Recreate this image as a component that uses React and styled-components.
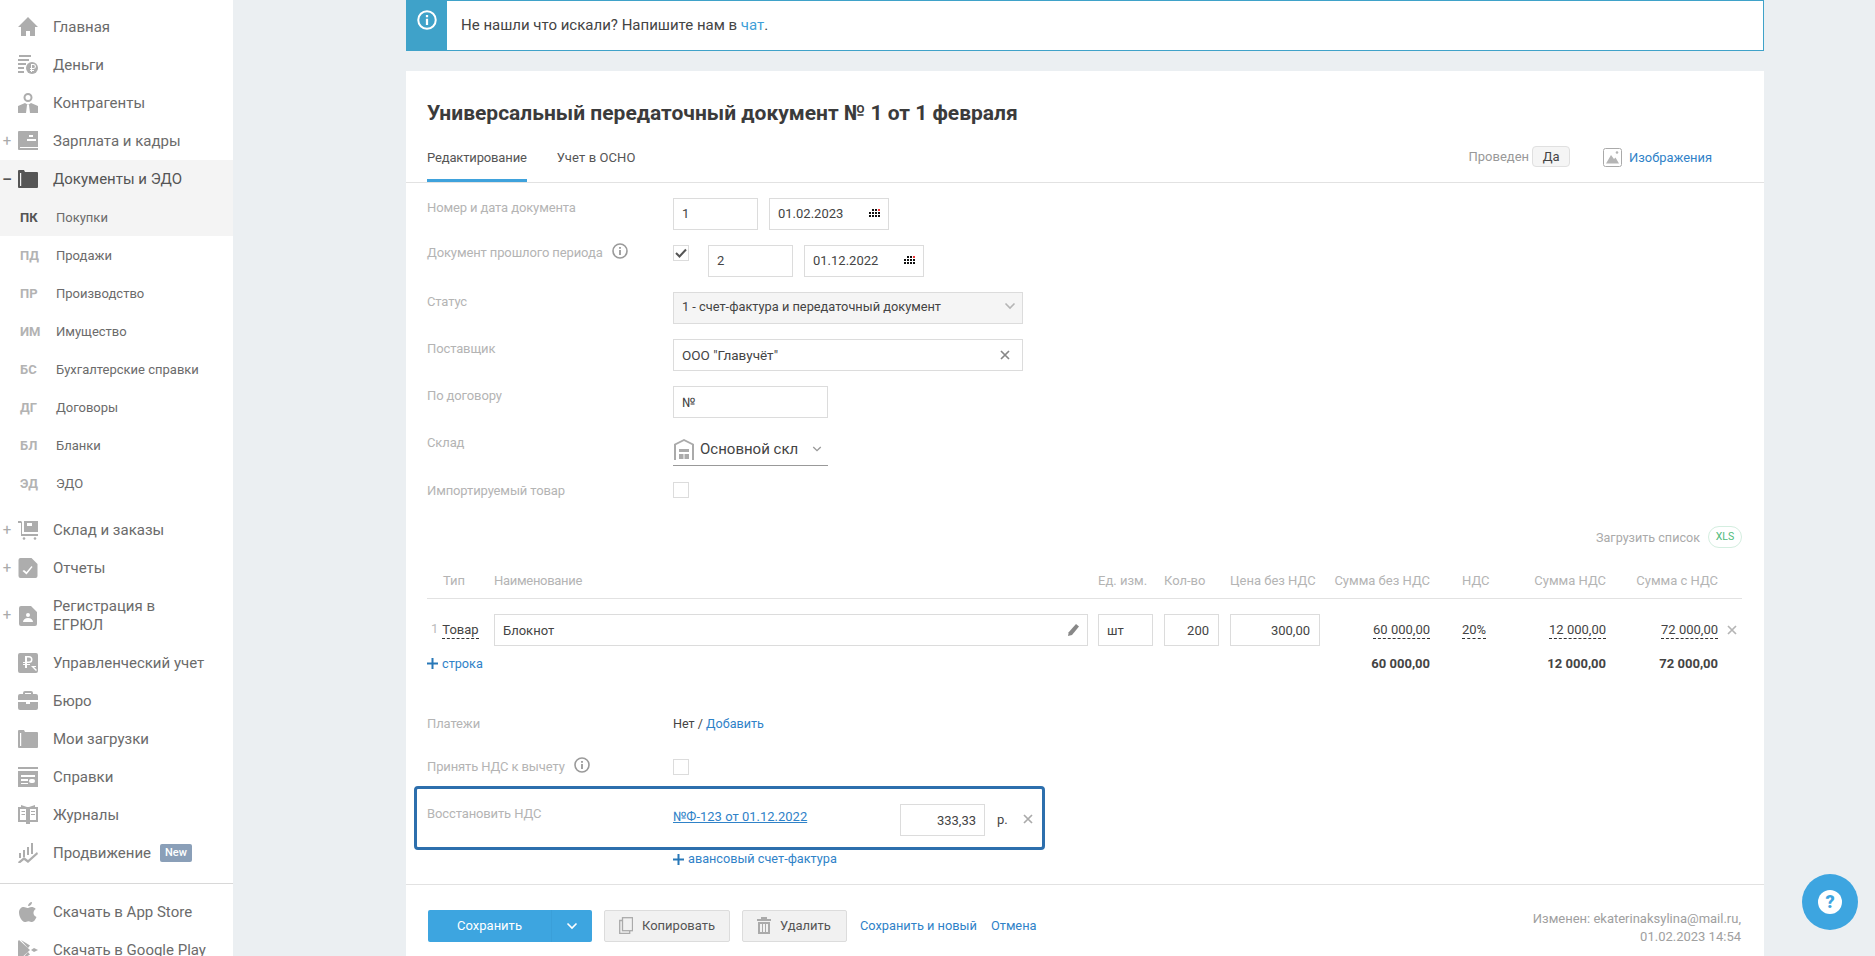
import React from "react";
import styled, { createGlobalStyle } from "styled-components";

const Global = createGlobalStyle`
  html, body { margin: 0; padding: 0; height: 956px; overflow: hidden; background: #ebeff2; }
  body { font-family: Roboto, "Liberation Sans", sans-serif; color: #333; font-size: 13px; }
  * { box-sizing: border-box; }
`;

const Page = styled.div`display: flex; height: 956px; overflow: hidden;`;
const Sidebar = styled.nav`width: 233px; flex: none; background: #fff; padding-top: 8px;`;
const NavItem = styled.div`
  display: flex; align-items: center; height: ${p => p.$tall ? "57px" : "38px"};
  background: ${p => p.$active ? "#f4f4f4" : "transparent"};
  color: ${p => p.$active ? "#555" : "#6b6b6b"};
  font-size: 15px; line-height: 19px;
`;
const Toggle = styled.span`width: 18px; flex: none; text-align: center; font-size: 15px; color: ${p => p.$active ? "#555" : "#aaa"}; font-weight: ${p => p.$active ? 700 : 400}; padding-right: 4px;`;
const NavIcon = styled.svg`width: 20px; height: 20px; flex: none; margin-right: 15px; fill: ${p => p.$active ? "#555" : "#adadad"};`;
const SubItem = styled.div`
  display: flex; align-items: center; height: 38px; padding: 1px 0 0 20px; font-size: 13px;
  background: ${p => p.$active ? "#f4f4f4" : "transparent"}; color: #6b6b6b;
`;
const SubCode = styled.b`width: 36px; flex: none; font-size: 13px; color: ${p => p.$active ? "#555" : "#b3b3b3"};`;
const NavGap = styled.div`height: ${p => p.$h}px;`;
const NavDivider = styled.div`height: 1px; background: #d8d8d8; margin: 11px 0 9px;`;
const NewBadge = styled.span`background: #8a9fb8; color: #fff; font-size: 11px; font-weight: 500; border-radius: 2px; padding: 0 5px; height: 18px; line-height: 17px; margin-left: 9px;`;

const Main = styled.main`flex: none; width: 1358px; margin-left: 173px;`;
const Alert = styled.div`display: flex; height: 51px; background: #fff; border: solid #3fa2c9; border-width: 1px 1px 1px 0;`;
const AlertIcon = styled.div`width: 41px; background: #3fa2c9; display: flex; justify-content: center; padding-top: 10px; margin-top: -1px; margin-bottom: -1px;`;
const AlertText = styled.div`padding: 14px 0 0 14px; font-size: 15px; line-height: 20px; color: #444;`;
const Link = styled.a`color: ${p => p.$light ? "#3f9fd8" : "#2f82c8"}; text-decoration: ${p => p.$under ? "underline" : "none"};`;

const Card = styled.section`background: #fff; margin-top: 20px; height: 900px;`;
const Title = styled.h1`margin: 0; padding: 29px 21px 0; font-size: 21px; line-height: 26px; font-weight: 700; color: #3b3b3b;`;
const TabBar = styled.div`display: flex; align-items: flex-start; height: 43px; margin-top: 14px; padding-left: 21px; border-bottom: 1px solid #e2e2e2; padding-right: 52px;`;
const Tab = styled.div`height: 42px; padding-top: 9px; line-height: 18px; font-size: 13px; letter-spacing: ${p => p.$ls || 0}px; color: #555; margin-right: 30px; border-bottom: 3px solid ${p => p.$active ? "#3fa2dc" : "transparent"};`;
const TabSpacer = styled.div`flex: 1;`;
const Posted = styled.div`display: flex; align-items: center; height: 21px; margin-top: 6px; color: #999; font-size: 13px; gap: 3px; margin-right: 33px;`;
const YesPill = styled.span`width: 38px; height: 21px; line-height: 19px; text-align: center; background: #f5f5f5; border: 1px solid #e0e0e0; border-radius: 4px; color: #444;`;
const Images = styled.div`display: flex; align-items: center; gap: 7px; margin-top: 7px; height: 21px; font-size: 12.9px;`;

const Form = styled.div`padding: 15px 22px 0 21px;`;
const Row = styled.div`display: grid; grid-template-columns: 246px 1fr; min-height: 32px; margin-bottom: ${p => p.$mb ?? 15}px;`;
const Label = styled.div`color: #b4b4b4; font-size: 13px; letter-spacing: -0.12px; line-height: 20px; margin-top: ${p => p.$mt ?? 0}px; display: flex; align-items: flex-start; gap: 9px; height: 20px;`;
const Controls = styled.div`display: flex; align-items: flex-start; gap: ${p => p.$gap ?? 11}px;`;
const Input = styled.div`
  width: ${p => p.$w}px; height: 32px; border: 1px solid #dcdcdc; background: ${p => p.$bg || "#fff"};
  display: flex; align-items: center; justify-content: ${p => p.$right ? "flex-end" : "space-between"};
  padding: 0 ${p => p.$pr ?? 8}px ${p => p.$pb ?? 0}px 8px; font-size: ${p => p.$fs || 13}px; color: #444; flex: none;
`;
const Check = styled.div`width: 16px; height: 16px; border: 1px solid #dcdcdc; flex: none; display: flex; align-items: center; justify-content: center; margin-right: ${p => p.$mr || 0}px; margin-top: ${p => p.$mt || 0}px;`;
const Select = styled.div`width: 155px; height: 33px; border-bottom: 1px solid #999; display: flex; align-items: center; font-size: 15px; color: #444; gap: 5px; white-space: nowrap;`;
const Clip = styled.span`width: 98px; overflow: hidden; margin-right: 9px;`;
const Upload = styled.div`display: flex; justify-content: flex-end; align-items: center; gap: 8px; color: #aaa; font-size: 12.6px; margin-top: -1px; height: 22px;`;
const XlsPill = styled.span`width: 34px; height: 22px; border: 1px solid #d4eee0; border-radius: 11px; color: #4fbb7c; font-size: 10.5px; text-align: center; line-height: 20px;`;

const Grid = styled.div`display: grid; grid-template-columns: 67px 604px 66px 66px 90px 110px 70px 106px 112px 24px; align-items: center;`;
const Head = styled(Grid)`height: 51px; padding-top: 15px; border-bottom: 1px solid #e2e2e2; color: #b4b4b4; font-size: 13px;`;
const HeadCell = styled.div`text-align: ${p => p.$right ? "right" : "left"}; padding-left: ${p => p.$pl || 0}px; letter-spacing: ${p => p.$ls || 0}px; white-space: nowrap;`;
const BodyRow = styled(Grid)`margin-top: 15px; height: 32px; font-size: 13px;`;
const TypeCell = styled.div`display: flex; gap: 4px; padding-left: 4px; color: #bbb;`;
const Dashed = styled.span`color: #444; border-bottom: 1px dashed #333; line-height: 17px; display: inline-block;`;
const NumCell = styled.div`text-align: right; font-weight: ${p => p.$b ? 700 : 400}; color: #444;`;
const LeftCell = styled.div`padding-left: ${p => p.$pl || 0}px;`;
const Close = styled.span`text-align: right; display: block; padding-right: ${p => p.$pr || 0}px;`;
const TotalRow = styled(Grid)`height: 20px; margin-top: 7px; font-size: 13px;`;
const PlusLink = styled(Link)`display: inline-flex; align-items: center; gap: 4px; font-size: 12.7px; white-space: nowrap;`;
const Plus = styled.svg`width: 11px; height: 11px; fill: #2878b8;`;
const FlatRow = styled.div`display: grid; grid-template-columns: 246px 1fr; height: 20px; margin-top: ${p => p.$mt}px; line-height: 20px; color: #444; font-size: ${p => p.$fs || 13}px;`;
const Highlight = styled.div`
  width: 631px; height: 64px; margin: ${p => p.$mt}px 0 0 -13px; border: 3px solid #2d6fad; border-radius: 4px;
  display: grid; grid-template-columns: 246px 227px 85px 1fr; padding: 15px 0 0 10px;
`;
const LinkCell = styled.div`line-height: 20px; padding-top: 3px; font-size: 13px;`;
const Rub = styled.div`padding: 8px 0 0 12px; color: #444; display: flex; justify-content: space-between;`;
const Divider = styled.div`height: 1px; background: #e2e2e2; margin-top: ${p => p.$mt}px;`;
const Footer = styled.div`display: flex; align-items: flex-start; padding: 25px 23px 0 22px;`;
const Save = styled.div`width: 164px; height: 32px; display: flex; background: #3da5e0; border-radius: 2px; color: #fff; font-size: 13px; line-height: 31px;`;
const SaveLabel = styled.div`width: 124px; text-align: center; border-right: 1px solid #3a9fd9;`;
const SaveArrow = styled.div`flex: 1; display: flex; align-items: center; justify-content: center;`;
const GrayBtn = styled.div`
  width: ${p => p.$w}px; margin-left: 12px; height: 32px; border: 1px solid #dcdcdc; border-radius: 2px; background: #f1f1f1;
  display: flex; align-items: center; gap: 9px; padding: 0 0 1px 14px; color: #555; font-size: 13px;
`;
const FootLink = styled(Link)`line-height: 31px; margin-left: ${p => p.$ml}px; font-size: 12.8px;`;
const Changed = styled.div`margin-left: auto; text-align: right; color: #a0a0a0; font-size: 13px; line-height: 18px;`;
const Help = styled.div`position: fixed; left: 1802px; top: 874px; width: 56px; height: 56px; border-radius: 50%; background: #3da5e0; display: flex; align-items: center; justify-content: center;`;
const HelpDot = styled.div`width: 24px; height: 24px; border-radius: 50%; background: #fff; color: #3da5e0; font-weight: 900; font-size: 18px; line-height: 24px; text-align: center;`;

const icons = {
  home: <path d="M10 0l10 10h-3v9h-5v-5H8v5H3v-9H0z" />,
  money: <><path d="M1 0h12v2H1zM0 4h11v2H0zM0 8h8v2H0zM0 12h6v2H0zM0 16h6v2H0z" /><circle cx="14" cy="13" r="6" /><path d="M13 9h2.500a2 2 0 0 1 0 5H14v1h2v1h-2v1h-1v-1h-1v-1h1v-1h-1v-1h1zm1 1v3h1.400a1.500 1.500 0 0 0 0-3z" fill="#fff" /></>,
  people: <><path fillRule="evenodd" d="M10 0a4.500 4.500 0 1 1 0 9 4.500 4.500 0 0 1 0-9zm0 2a2.500 2.500 0 1 0 0 5 2.500 2.500 0 0 0 0-5z" /><path d="M7 10 0 13v7h8l1-8h2l1 8h8v-7l-7-3-3 2z" /></>,
  wallet: <path fillRule="evenodd" d="M1 0h19v16H2v1h18v2H1a1 1 0 0 1-1-1V1a1 1 0 0 1 1-1zm10 4v2h4V4zm-2 4v2h9V8z" />,
  folder: <path d="M0 2a1 1 0 0 1 1-1h5l1 2h12a1 1 0 0 1 1 1v14a1 1 0 0 1-1 1H1a1 1 0 0 1-1-1zm2 2v13h1.200V4z" fillRule="evenodd" />,
  stock: <><path d="M0 1h3l1 1v12h16v2H3V3H0z" /><path fillRule="evenodd" d="M6 1h14v11H6zM9 3v3h5V3z" /><circle cx="6" cy="18.500" r="1.300" /><circle cx="17" cy="18.500" r="1.300" /></>,
  report: <path fillRule="evenodd" d="M2 0h11l6 6v12a2 2 0 0 1-2 2H2a2 2 0 0 1-2-2V2a2 2 0 0 1 2-2zm11 8-5 6-2.500-2L4 13l4 3.500 6-7.500z" transform="translate(.5)" />,
  reg: <path fillRule="evenodd" d="M3 0h10l6 6v12a2 2 0 0 1-2 2H3a2 2 0 0 1-2-2V2a2 2 0 0 1 2-2zm7 7a2 2 0 1 0 0 4 2 2 0 0 0 0-4zm-5 9h10c0-2-2-4-5-4s-5 2-5 4z" />,
  manage: <path fillRule="evenodd" d="M2 0h16a2 2 0 0 1 2 2v16a2 2 0 0 1-2 2H2a2 2 0 0 1-2-2V2a2 2 0 0 1 2-2zm5 3v6H5v1h2v1H5v1h2v3h2v-3h3v-1H9v-1h2a3.500 3.500 0 0 0 0-7zm2 1.500h2a2 2 0 0 1 0 4H9zM13 13l5 5 1-1-3-3h2v-1z" />,
  brief: <path d="M7 0h6a2 2 0 0 1 2 2v1h3a2 2 0 0 1 2 2v4H0V5a2 2 0 0 1 2-2h3V2a2 2 0 0 1 2-2zm0 2v1h6V2zM0 11h8v2h4v-2h8v6a2 2 0 0 1-2 2H2a2 2 0 0 1-2-2z" />,
  refs: <path fillRule="evenodd" d="M0 0h20v2H0zM0 4h20v16H0zM3 8v2h14V8zM3 12v2h7v-2zM3 16v1h7v-1zM13 12a2 2 0 1 0 0 4h2a2 2 0 1 0 0-4z" />,
  journal: <path fillRule="evenodd" d="M0 2h3V0l6 2h2l6-2v2h3v15h-8v2H8v-2H0zM2 4v11h6V4zM12 4v11h6V4zM3.500 6H7v1H3.500zM3.500 9H7v1H3.500zM13 6h4v1h-4zM13 9h4v1h-4z" />,
  promo: <path d="M13 0h2v11h-2zM9 4h2v8H9zM5 7h2v7H5zM1 10h2v5H1zM0 19l6-5 4 3 9-8 1 2-10 9-4-3-5 4z" />,
  apple: <path d="M14 0c.2 2-1.800 4.300-4 4 0-2 2-4 4-4zm4.500 15c-1 2.500-2.600 5-4.500 5-1.300 0-1.800-.8-3.500-.8S8 20 6.800 20C4 20 1 14.500 1 10.500 1 7 3.300 5 5.700 5c1.500 0 2.700 1 3.700 1s2.300-1.100 4.200-1.100c1 0 3 .4 4.200 2.200-3.400 2-2.900 6.700.7 7.900z" />,
  play: <path d="M1 0l11 10L1 20c-.6-.3-1-1-1-1.500v-17C0 .9.400.3 1 0zm2 0 9 5.500-2 2.500zm13 8 4 2-4 2-3-2zM3 20l7-8 2 2.500z" />,
};
const NI = ({ k, $active }) => <NavIcon viewBox="0 0 20 20" $active={$active}>{icons[k]}</NavIcon>;

const Item = ({ k, t, toggle, active, tall, children }) => (
  <NavItem $active={active} $tall={tall}>
    <Toggle $active={active}>{toggle}</Toggle>
    <NI k={k} $active={active} />
    <span>{t}</span>
    {children}
  </NavItem>
);
const Sub = ({ c, t, active }) => <SubItem $active={active}><SubCode $active={active}>{c}</SubCode>{t}</SubItem>;

const DateIcon = () => (
  <svg width="11" height="9" viewBox="0 0 11 9">
    {[0, 1, 2].map(r => [0, 1, 2, 3].map(c => (r === 0 && c === 0 ? null : <rect key={r + "-" + c} x={c * 3} y={r * 3} width="2" height="2" fill={r === 0 && c === 3 ? "#e33" : "#111"} />)))}
  </svg>
);
const InfoIcon = ({ size = 16, color = "#9a9a9a" }) => (
  <svg width={size} height={size} viewBox="0 0 16 16" fill="none">
    <circle cx="8" cy="8" r="7" stroke={color} strokeWidth="1.600" />
    <rect x="7.100" y="7" width="1.800" height="5" fill={color} /><rect x="7.100" y="4" width="1.800" height="1.800" fill={color} />
  </svg>
);
const Chevron = ({ color = "#b5b5b5", w = 12 }) => (
  <svg width={w} height="8" viewBox="0 0 12 8" fill="none"><path d="M1.500 1.500 6 6l4.500-4.500" stroke={color} strokeWidth="1.600" /></svg>
);
const Times = ({ color = "#888", s = 10 }) => (
  <svg width={s} height={s} viewBox="0 0 10 10"><path d="M1 1l8 8M9 1 1 9" stroke={color} strokeWidth="1.700" /></svg>
);
const PlusIcon = () => <Plus viewBox="0 0 11 11"><path d="M4.500 0h2v4.500H11v2H6.500V11h-2V6.500H0v-2h4.500z" /></Plus>;
const TickIcon = () => <svg width="12" height="10" viewBox="0 0 12 10" fill="none"><path d="M1 5l3.500 3.500L11 1.500" stroke="#555" strokeWidth="2" /></svg>;
const Pencil = () => <svg width="11" height="12" viewBox="0 0 11 12"><path d="M8 0l3 2.500L4 11 0 12l.7-3.800z" fill="#888" /></svg>;

export default function App() {
  return (
    <Page>
      <Global />
      <Sidebar>
        <Item k="home" t="Главная" />
        <Item k="money" t="Деньги" />
        <Item k="people" t="Контрагенты" />
        <Item k="wallet" t="Зарплата и кадры" toggle="+" />
        <Item k="folder" t="Документы и ЭДО" toggle="–" active />
        <Sub c="ПК" t="Покупки" active />
        <Sub c="ПД" t="Продажи" />
        <Sub c="ПР" t="Производство" />
        <Sub c="ИМ" t="Имущество" />
        <Sub c="БС" t="Бухгалтерские справки" />
        <Sub c="ДГ" t="Договоры" />
        <Sub c="БЛ" t="Бланки" />
        <Sub c="ЭД" t="ЭДО" />
        <NavGap $h={9} />
        <Item k="stock" t="Склад и заказы" toggle="+" />
        <Item k="report" t="Отчеты" toggle="+" />
        <Item k="reg" t={<>Регистрация в<br />ЕГРЮЛ</>} toggle="+" tall />
        <Item k="manage" t="Управленческий учет" />
        <Item k="brief" t="Бюро" />
        <Item k="folder" t="Мои загрузки" />
        <Item k="refs" t="Справки" />
        <Item k="journal" t="Журналы" />
        <Item k="promo" t="Продвижение"><NewBadge>New</NewBadge></Item>
        <NavDivider />
        <Item k="apple" t="Скачать в App Store" />
        <Item k="play" t="Скачать в Google Play" />
      </Sidebar>
      <Main>
        <Alert>
          <AlertIcon><InfoIcon size={20} color="#fff" /></AlertIcon>
          <AlertText>Не нашли что искали? Напишите нам в <Link $light>чат</Link>.</AlertText>
        </Alert>
        <Card>
          <Title>Универсальный передаточный документ № 1 от 1 февраля</Title>
          <TabBar>
            <Tab $active $ls={-0.15}>Редактирование</Tab>
            <Tab $ls={0.1}>Учет в ОСНО</Tab>
            <TabSpacer />
            <Posted>Проведен <YesPill>Да</YesPill></Posted>
            <Images>
              <svg width="19" height="19" viewBox="0 0 19 19" fill="none">
                <rect x=".5" y=".5" width="18" height="18" rx="2" stroke="#aaa" />
                <path d="M3 15.500 8 7l3 4 1.500-1.500L16 15.500z" fill="#b5b5b5" /><circle cx="14" cy="4.500" r="1.300" fill="#b5b5b5" />
              </svg>
              <Link>Изображения</Link>
            </Images>
          </TabBar>
          <Form>
            <Row>
              <Label>Номер и дата документа</Label>
              <Controls><Input $w={85} $pb={1}>1</Input><Input $w={120} $pb={1}>01.02.2023<DateIcon /></Input></Controls>
            </Row>
            <Row>
              <Label $mt={-2}>Документ прошлого периода <InfoIcon /></Label>
              <Controls>
                <Check $mr={8}><TickIcon /></Check>
                <Input $w={85} $pb={1}>2</Input><Input $w={120} $pb={1}>01.12.2022<DateIcon /></Input>
              </Controls>
            </Row>
            <Row>
              <Label>Статус</Label>
              <Input $w={350} $bg="#f5f5f5" $pr={6} $pb={4} $fs={12.8}>1 - счет-фактура и передаточный документ<Chevron /></Input>
            </Row>
            <Row>
              <Label>Поставщик</Label>
              <Input $w={350} $pr={12} $fs={13.5}>ООО "Главучёт"<Times /></Input>
            </Row>
            <Row>
              <Label>По договору</Label>
              <Input $w={155}>№</Input>
            </Row>
            <Row>
              <Label>Склад</Label>
              <Select>
                <svg width="22" height="22" viewBox="0 0 22 22" fill="#aaa">
                  <path d="M11 1 1 6v16h2V7l8-4 8 4v15h2V6z" /><rect x="6" y="11" width="10" height="3" /><rect x="6" y="16" width="4.500" height="5" /><rect x="11.500" y="16" width="4.500" height="5" />
                </svg>
                <Clip>Основной склад</Clip>
                <Chevron color="#999" w={10} />
              </Select>
            </Row>
            <Row $mb={14}>
              <Label>Импортируемый товар</Label>
              <Check $mt={1} />
            </Row>
            <Upload>Загрузить список <XlsPill>XLS</XlsPill></Upload>
            <Head>
              <HeadCell $pl={16}>Тип</HeadCell>
              <HeadCell $ls={-0.3}>Наименование</HeadCell>
              <HeadCell>Ед. изм.</HeadCell>
              <HeadCell>Кол-во</HeadCell>
              <HeadCell>Цена без НДС</HeadCell>
              <HeadCell $right>Сумма без НДС</HeadCell>
              <HeadCell $pl={32}>НДС</HeadCell>
              <HeadCell $right>Сумма НДС</HeadCell>
              <HeadCell $right>Сумма с НДС</HeadCell>
              <span />
            </Head>
            <BodyRow>
              <TypeCell>1 <Dashed>Товар</Dashed></TypeCell>
              <Input $w={594}>Блокнот<Pencil /></Input>
              <Input $w={55}>шт</Input>
              <Input $w={55} $right $pr={9}>200</Input>
              <Input $w={90} $right $pr={9}>300,00</Input>
              <NumCell><Dashed>60 000,00</Dashed></NumCell>
              <LeftCell $pl={32}><Dashed>20%</Dashed></LeftCell>
              <NumCell><Dashed>12 000,00</Dashed></NumCell>
              <NumCell><Dashed>72 000,00</Dashed></NumCell>
              <Close $pr={5}><Times color="#b5b5b5" /></Close>
            </BodyRow>
            <TotalRow>
              <PlusLink><PlusIcon />строка</PlusLink>
              <span /><span /><span /><span />
              <NumCell $b>60 000,00</NumCell>
              <span />
              <NumCell $b>12 000,00</NumCell>
              <NumCell $b>72 000,00</NumCell>
              <span />
            </TotalRow>
            <FlatRow $mt={41} $fs={12.6}>
              <Label>Платежи</Label>
              <div>Нет / <Link>Добавить</Link></div>
            </FlatRow>
            <FlatRow $mt={23}>
              <Label>Принять НДС к вычету <InfoIcon /></Label>
              <Check $mt={2} />
            </FlatRow>
            <Highlight $mt={9}>
              <Label>Восстановить НДС</Label>
              <LinkCell><Link $under>№Ф-123 от 01.12.2022</Link></LinkCell>
              <Input $w={85} $right>333,33</Input>
              <Rub>р.<Close $pr={9}><Times color="#aaa" /></Close></Rub>
            </Highlight>
            <FlatRow $mt={-1}>
              <span />
              <PlusLink><PlusIcon />авансовый счет-фактура</PlusLink>
            </FlatRow>
          </Form>
          <Divider $mt={15} />
          <Footer>
            <Save>
              <SaveLabel>Сохранить</SaveLabel>
              <SaveArrow><Chevron color="#fff" /></SaveArrow>
            </Save>
            <GrayBtn $w={126}>
              <svg width="14" height="17" viewBox="0 0 14 17" fill="none" stroke="#aaa" strokeWidth="1.300"><rect x="3.500" y=".7" width="10" height="13" /><path d="M3 3.500H.7v12.800h10V14" /></svg>
              Копировать
            </GrayBtn>
            <GrayBtn $w={105}>
              <svg width="14" height="17" viewBox="0 0 14 17" fill="#aaa"><path d="M4 0h6v2h4v2H0V2h4zM1 5h12v12H1zm2 2v8h2V7zm3 0v8h2V7zm3 0v8h2V7z" fillRule="evenodd" /></svg>
              Удалить
            </GrayBtn>
            <FootLink $ml={13}>Сохранить и новый</FootLink>
            <FootLink $ml={14}>Отмена</FootLink>
            <Changed>Изменен: ekaterinaksylina@mail.ru,<br />01.02.2023 14:54</Changed>
          </Footer>
        </Card>
      </Main>
      <Help><HelpDot>?</HelpDot></Help>
    </Page>
  );
}
